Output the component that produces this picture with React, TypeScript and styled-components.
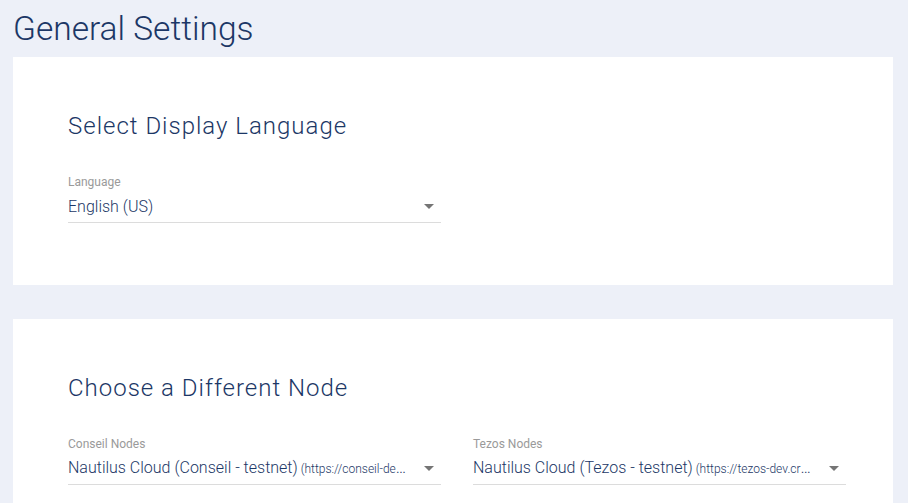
import React from "react";
import styled, { createGlobalStyle } from "styled-components";

const GlobalStyle = createGlobalStyle`
  html, body {
    margin: 0;
    padding: 0;
    background: #edf0f8;
    font-family: Roboto, "Noto Sans", sans-serif;
    overflow: hidden;
  }
`;

const Page = styled.div`
  padding: 0 15px 0 13px;
  display: flex;
  flex-direction: column;
`;

const Title = styled.h1`
  margin: 0;
  font-size: 33.5px;
  line-height: 57px;
  font-weight: 300;
  color: #1c3766;
  letter-spacing: 0;
`;

const Card = styled.section`
  background: #ffffff;
  padding: 53px 55px 62px;
  margin-bottom: 34px;
`;

const CardTitle = styled.h2`
  margin: 0 0 32px;
  font-size: 24px;
  line-height: 32px;
  font-weight: 300;
  letter-spacing: 1px;
  color: #1c3766;
`;

const Row = styled.div`
  display: flex;
  gap: 32px;
`;

const Field = styled.div`
  width: 373px;
  display: flex;
  flex-direction: column;
`;

const Label = styled.label`
  font-size: 12px;
  line-height: 16px;
  color: #9a9a9a;
  height: 16px;
`;

const SelectBox = styled.div`
  position: relative;
  height: 32px;
  border-bottom: 1px solid #dcdcdc;
  display: flex;
  align-items: center;
  padding-right: 32px;
`;

const Value = styled.div`
  font-size: 16px;
  line-height: 19px;
  font-weight: 300;
  color: #1c3766;
  white-space: nowrap;
  overflow: hidden;
  text-overflow: ellipsis;
  padding: 7px 0 6px;
`;

const Url = styled.span`
  font-size: 12px;
`;

const Arrow = styled.svg`
  position: absolute;
  right: 0;
  top: calc(50% - 12px);
  width: 24px;
  height: 24px;
  fill: rgba(0, 0, 0, 0.54);
`;

function Select({ label, value, url }: { label: string; value: string; url?: string }) {
  return (
    <Field>
      <Label>{label}</Label>
      <SelectBox>
        <Value>
          {value}
          {url && <Url> ({url})</Url>}
        </Value>
        <Arrow viewBox="0 0 24 24">
          <path d="M7 10l5 5 5-5z" />
        </Arrow>
      </SelectBox>
    </Field>
  );
}

export default function App() {
  return (
    <>
      <GlobalStyle />
      <Page>
        <Title>General Settings</Title>
        <Card>
          <CardTitle>Select Display Language</CardTitle>
          <Row>
            <Select label="Language" value="English (US)" />
          </Row>
        </Card>
        <Card>
          <CardTitle>Choose a Different Node</CardTitle>
          <Row>
            <Select
              label="Conseil Nodes"
              value="Nautilus Cloud (Conseil - testnet)"
              url="https://conseil-dev.cryptonomic-infra.tech:443"
            />
            <Select
              label="Tezos Nodes"
              value="Nautilus Cloud (Tezos - testnet)"
              url="https://tezos-dev.cryptonomic-infra.tech:443"
            />
          </Row>
        </Card>
      </Page>
    </>
  );
}
